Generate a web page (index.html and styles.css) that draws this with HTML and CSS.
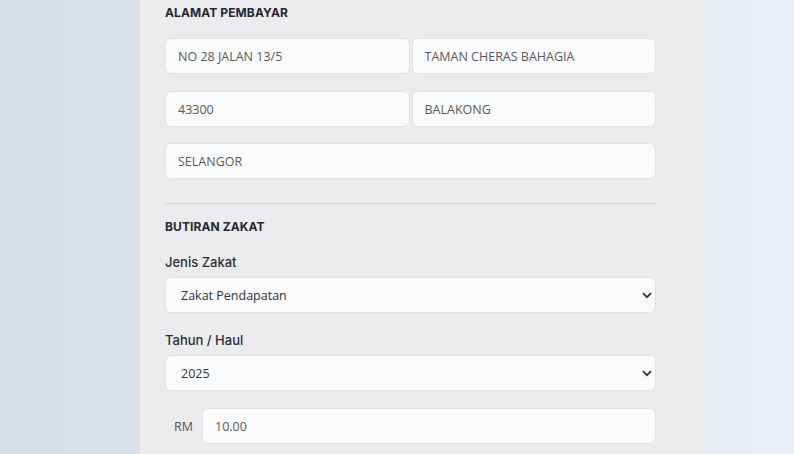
FILE: index.html
```html
<!DOCTYPE html>
<html lang="ms">
<head>
<meta charset="utf-8">
<title>Zakat</title>
<link rel="stylesheet" href="styles.css">
</head>
<body>
<div class="page">
  <div class="card">
    <h3 class="section-title">ALAMAT PEMBAYAR</h3>
    <div class="row two">
      <input class="field" type="text" value="NO 28 JALAN 13/5">
      <input class="field" type="text" value="TAMAN CHERAS BAHAGIA">
    </div>
    <div class="row two">
      <input class="field" type="text" value="43300">
      <input class="field" type="text" value="BALAKONG">
    </div>
    <div class="row last">
      <input class="field" type="text" value="SELANGOR">
    </div>
    <hr class="divider">
    <h3 class="section-title title-2">BUTIRAN ZAKAT</h3>
    <label class="label">Jenis Zakat</label>
    <div class="select-wrap">
      <select class="field select"><option>Zakat Pendapatan</option></select>
      <svg class="chev" width="10" height="7" viewBox="0 0 10 7"><path d="M1 1.2 L5 5.2 L9 1.2" fill="none" stroke="#333" stroke-width="1.8"/></svg>
    </div>
    <label class="label">Tahun / Haul</label>
    <div class="select-wrap">
      <select class="field select"><option>2025</option></select>
      <svg class="chev" width="10" height="7" viewBox="0 0 10 7"><path d="M1 1.2 L5 5.2 L9 1.2" fill="none" stroke="#333" stroke-width="1.8"/></svg>
    </div>
    <div class="amount">
      <span class="prefix">RM</span>
      <input class="field" type="text" value="10.00">
    </div>
  </div>
</div>
</body>
</html>
```

FILE: styles.css
```css
* { box-sizing: border-box; }
html, body { margin: 0; padding: 0; }
body {
  width: 794px;
  height: 454px;
  overflow: hidden;
  background: linear-gradient(to right, #d4dee6 0%, #dde4ec 40%, #e9eef6 100%);
  font-family: "Open Sans", "Liberation Sans", sans-serif;
}
.page {
  padding-left: 140px;
}
.card {
  width: 564px;
  height: 454px;
  background: #ececee;
  padding: 4px 48px 0 25px;
  display: flex;
  flex-direction: column;
}
.section-title {
  margin: 0;
  font-family: "Inter", "Liberation Sans", sans-serif;
  font-weight: 700;
  font-size: 12px;
  line-height: 18px;
  color: #1f2937;
  letter-spacing: 0.1px;
}
.row {
  display: flex;
  gap: 2px;
  margin-top: 16px;
}
.row + .row { margin-top: 17px; }
.row.last { margin-top: 16px; }
.row .field { flex: 1; min-width: 0; }
.field {
  height: 36px;
  border: 1px solid #dfe2e6;
  border-radius: 6px;
  background: #fafbfc;
  font-family: "Open Sans", "Liberation Sans", sans-serif;
  font-size: 12.5px;
  color: #5a5a5a;
  padding: 0 12px;
  outline: none;
  width: 100%;
}
.divider {
  border: none;
  border-top: 1px solid #d2d5d9;
  margin: 24px 0 0 0;
  height: 0;
}
.title-2 { margin-top: 14px; }
.label {
  display: block;
  margin-top: 17px;
  font-family: "Inter", "Liberation Sans", sans-serif;
  font-weight: 500;
  font-size: 13px;
  line-height: 18px;
  color: #2a2f36;
}
.select-wrap {
  position: relative;
  margin-top: 6px;
}
.select {
  appearance: none;
  -webkit-appearance: none;
  padding-left: 15px;
  color: #333;
  display: block;
}
.chev {
  position: absolute;
  right: 4px;
  top: 15px;
}
.select-wrap + .label { margin-top: 18px; }
.amount {
  display: flex;
  align-items: center;
  margin-top: 17px;
}
.prefix {
  width: 37px;
  text-align: center;
  font-size: 12.5px;
  color: #555;
}
.amount .field { flex: 1; }
```
